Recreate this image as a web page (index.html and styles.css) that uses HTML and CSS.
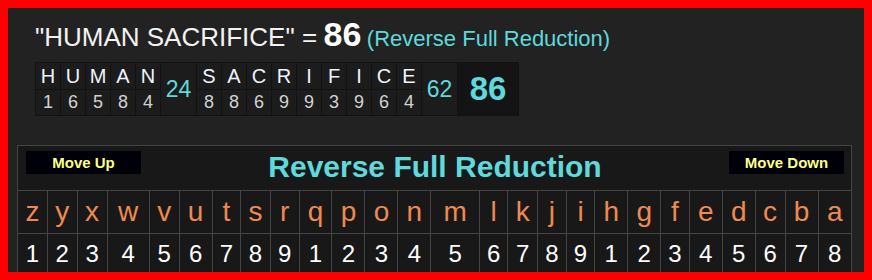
FILE: index.html
```html
<!DOCTYPE html>
<html>
<head>
<meta charset="utf-8">
<link rel="stylesheet" href="styles.css">
</head>
<body>
<div class="frame">
  <div class="title">
    <span class="phrase">"HUMAN SACRIFICE" =</span>
    <span class="total">86</span>
    <span class="cipher">(Reverse Full Reduction)</span>
  </div>
  <div class="word">
    <div class="ch"><span class="l">H</span><span class="n">1</span></div>
    <div class="ch"><span class="l">U</span><span class="n">6</span></div>
    <div class="ch"><span class="l">M</span><span class="n">5</span></div>
    <div class="ch"><span class="l">A</span><span class="n">8</span></div>
    <div class="ch"><span class="l">N</span><span class="n">4</span></div>
    <div class="sum">24</div>
    <div class="ch"><span class="l">S</span><span class="n">8</span></div>
    <div class="ch"><span class="l">A</span><span class="n">8</span></div>
    <div class="ch"><span class="l">C</span><span class="n">6</span></div>
    <div class="ch"><span class="l">R</span><span class="n">9</span></div>
    <div class="ch"><span class="l">I</span><span class="n">9</span></div>
    <div class="ch"><span class="l">F</span><span class="n">3</span></div>
    <div class="ch"><span class="l">I</span><span class="n">9</span></div>
    <div class="ch"><span class="l">C</span><span class="n">6</span></div>
    <div class="ch"><span class="l">E</span><span class="n">4</span></div>
    <div class="sum">62</div>
    <div class="grand">86</div>
  </div>
  <table class="panel">
    <tr class="head">
      <td colspan="26">
        <div class="headrow">
          <span class="btn">Move Up</span>
          <span class="ptitle">Reverse Full Reduction</span>
          <span class="btn">Move Down</span>
        </div>
      </td>
    </tr>
    <tr class="letters">
      <td>z</td><td>y</td><td>x</td><td>w</td><td>v</td><td>u</td><td>t</td><td>s</td><td>r</td><td>q</td><td>p</td><td>o</td><td>n</td><td>m</td><td>l</td><td>k</td><td>j</td><td>i</td><td>h</td><td>g</td><td>f</td><td>e</td><td>d</td><td>c</td><td>b</td><td>a</td>
    </tr>
    <tr class="nums">
      <td>1</td><td>2</td><td>3</td><td>4</td><td>5</td><td>6</td><td>7</td><td>8</td><td>9</td><td>1</td><td>2</td><td>3</td><td>4</td><td>5</td><td>6</td><td>7</td><td>8</td><td>9</td><td>1</td><td>2</td><td>3</td><td>4</td><td>5</td><td>6</td><td>7</td><td>8</td>
    </tr>
  </table>
</div>
</body>
</html>
```

FILE: styles.css
```css
html, body {
  margin: 0;
  padding: 0;
  background: #ff0000;
}
body {
  font-family: "Liberation Sans", Arial, sans-serif;
}
.frame {
  box-sizing: border-box;
  width: 872px;
  height: 280px;
  border: 8px solid #ff0000;
  background: #222222;
  overflow: hidden;
  padding: 0 12px 0 9px;
}
.title {
  margin: 8px 0 0 18px;
  height: 46px;
  line-height: 37px;
  white-space: nowrap;
}
.phrase {
  color: #f2f2f2;
  font-size: 26px;
}
.total {
  color: #ffffff;
  font-size: 34px;
  font-weight: bold;
  margin-left: 2px;
}
.cipher {
  color: #5fd9dc;
  font-size: 22px;
  margin-left: 1px;
}
.word {
  display: flex;
  margin: 0 0 0 18px;
  width: max-content;
  background: #1c1c1c;
  border: 1px solid #121212;
}
.ch {
  display: flex;
  flex-direction: column;
  width: 25px;
  border-right: 1px solid #121212;
  box-sizing: border-box;
}
.ch .l {
  height: 26px;
  line-height: 27px;
  text-align: center;
  color: #eef4ff;
  font-size: 20px;
  border-bottom: 1px solid #121212;
}
.ch .n {
  height: 25px;
  line-height: 25px;
  text-align: center;
  color: #d2d2d2;
  font-size: 18px;
}
.sum {
  width: 36px;
  box-sizing: border-box;
  display: flex;
  align-items: center;
  justify-content: center;
  color: #5fd9dc;
  font-size: 23px;
  border-right: 1px solid #121212;
}
.grand {
  width: 60px;
  display: flex;
  align-items: center;
  justify-content: center;
  background: #141414;
  color: #5fd9dc;
  font-size: 33px;
  font-weight: bold;
}
.panel {
  margin-top: 29px;
  width: 835px;
  border-collapse: collapse;
  background: #181818;
  border: 1px solid #444444;
}
.panel td {
  border: 1px solid #444444;
  text-align: center;
  padding: 0;
}
.head td {
  height: 44px;
}
.headrow {
  display: flex;
  align-items: center;
  justify-content: space-between;
  padding: 0 7px 0 8px;
  height: 44px;
}
.btn {
  align-self: flex-start;
  margin-top: 5px;
  width: 115px;
  height: 23px;
  line-height: 23px;
  background: #000008;
  color: #ffff88;
  font-size: 15px;
  font-weight: bold;
  text-align: center;
}
.ptitle {
  color: #5fd9dc;
  font-size: 30px;
  font-weight: bold;
  margin-top: -2px;
}
.letters td {
  height: 42px;
  color: #ee8a50;
  font-size: 28px;
}
.nums td {
  height: 40px;
  color: #ffffff;
  font-size: 24px;
}
```
